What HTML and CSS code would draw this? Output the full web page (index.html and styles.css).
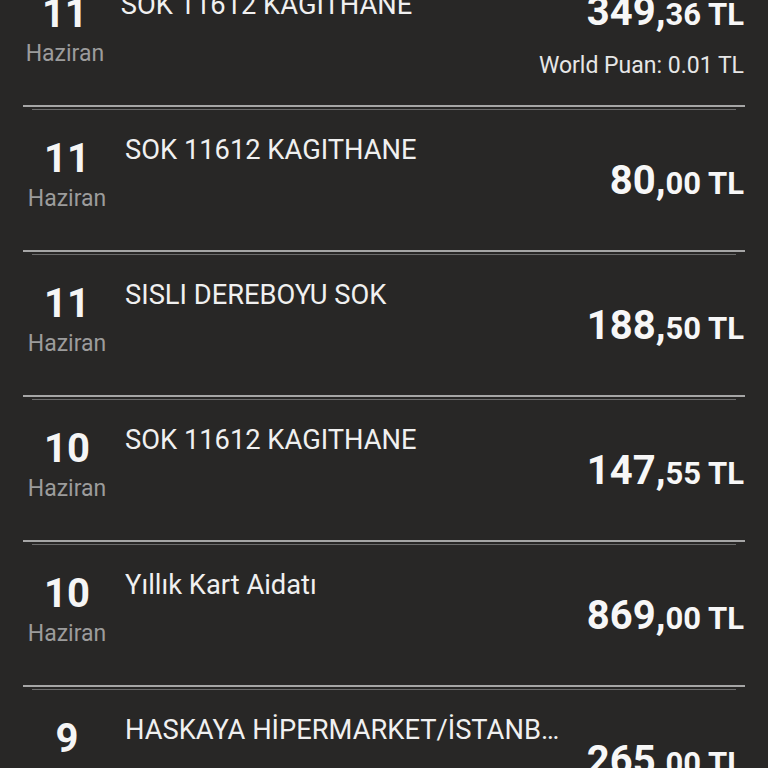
FILE: index.html
```html
<!DOCTYPE html>
<html lang="tr">
<head>
<meta charset="utf-8">
<title>Hesap Hareketleri</title>
<link rel="stylesheet" href="styles.css">
</head>
<body>
<div class="list">
  <div class="item">
    <div class="item-body">
      <div class="date"><div class="day">11</div><div class="month">Haziran</div></div>
      <div class="title">SOK 11612 KAGITHANE</div>
      <div class="amount-col">
        <div class="amount"><span class="big">349,</span><span class="small">36 TL</span></div>
        <div class="points">World Puan: 0.01 TL</div>
      </div>
    </div>
    <div class="sep"></div>
  </div>
  <div class="item">
    <div class="item-body">
      <div class="date"><div class="day">11</div><div class="month">Haziran</div></div>
      <div class="title">SOK 11612 KAGITHANE</div>
      <div class="amount-col">
        <div class="amount"><span class="big">80,</span><span class="small">00 TL</span></div>
      </div>
    </div>
    <div class="sep"></div>
  </div>
  <div class="item">
    <div class="item-body">
      <div class="date"><div class="day">11</div><div class="month">Haziran</div></div>
      <div class="title">SISLI DEREBOYU SOK</div>
      <div class="amount-col">
        <div class="amount"><span class="big">188,</span><span class="small">50 TL</span></div>
      </div>
    </div>
    <div class="sep"></div>
  </div>
  <div class="item">
    <div class="item-body">
      <div class="date"><div class="day">10</div><div class="month">Haziran</div></div>
      <div class="title">SOK 11612 KAGITHANE</div>
      <div class="amount-col">
        <div class="amount"><span class="big">147,</span><span class="small">55 TL</span></div>
      </div>
    </div>
    <div class="sep"></div>
  </div>
  <div class="item">
    <div class="item-body">
      <div class="date"><div class="day">10</div><div class="month">Haziran</div></div>
      <div class="title">Yıllık Kart Aidatı</div>
      <div class="amount-col">
        <div class="amount"><span class="big">869,</span><span class="small">00 TL</span></div>
      </div>
    </div>
    <div class="sep"></div>
  </div>
  <div class="item">
    <div class="item-body">
      <div class="date"><div class="day">9</div><div class="month">Haziran</div></div>
      <div class="title">HASKAYA HİPERMARKET/İSTANBUL</div>
      <div class="amount-col">
        <div class="amount"><span class="big">265,</span><span class="small">00 TL</span></div>
      </div>
    </div>
    <div class="sep"></div>
  </div>
</div>
</body>
</html>
```

FILE: styles.css
```css
html, body {
  margin: 0;
  padding: 0;
  background: #282726;
  height: 100%;
  overflow: hidden;
}

body {
  font-family: Roboto, "Noto Sans", "Liberation Sans", sans-serif;
  color: #f2f2f2;
}

.list {
  margin-top: -35px;
}

.item-body {
  display: flex;
  height: 140px;
}

.date {
  width: 86px;
  margin-left: 24px;
  display: flex;
  flex-direction: column;
  align-items: center;
  padding-top: 29px;
}

.day {
  font-size: 40px;
  line-height: 40px;
  font-weight: 700;
  color: #f5f5f5;
}

.month {
  font-size: 23px;
  line-height: 28px;
  margin-top: 6px;
  color: #9c9c9c;
}

.title {
  flex: 0 1 440px;
  min-width: 0;
  margin-left: 15px;
  padding-top: 24px;
  font-size: 27.3px;
  line-height: 32px;
  white-space: nowrap;
  overflow: hidden;
  text-overflow: ellipsis;
  color: #f0f0f0;
}

.amount-col {
  margin-left: auto;
  margin-right: 24px;
  align-self: center;
  padding-top: 9px;
  display: flex;
  flex-direction: column;
  align-items: flex-end;
}

.amount {
  font-weight: 700;
  line-height: 40px;
  white-space: nowrap;
  color: #f7f7f7;
}

.big {
  font-size: 40px;
}

.small {
  font-size: 31px;
}

.points {
  font-size: 23px;
  line-height: 42px;
  margin-top: 5px;
  color: #e6e6e6;
  white-space: nowrap;
}

.sep {
  height: 5px;
  box-sizing: border-box;
  margin: 0 23px;
  border-top: 2px solid #a6a6a6;
}

.sep::after {
  content: "";
  display: block;
  height: 1px;
  margin: 2px 9px 0;
  background: #6c6c6c;
}
```
